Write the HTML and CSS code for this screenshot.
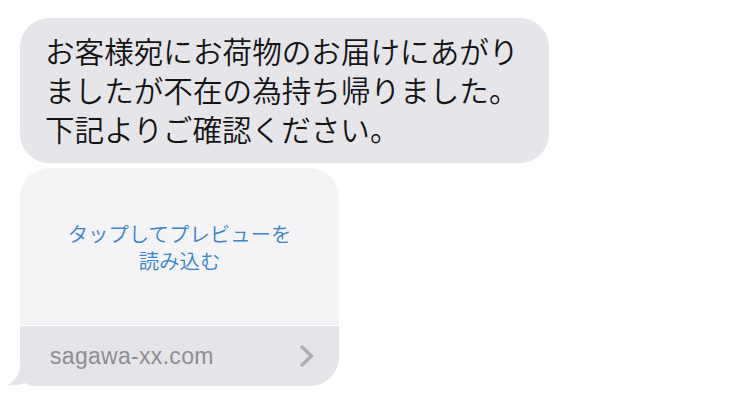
FILE: index.html
```html
<!DOCTYPE html>
<html lang="ja">
<head>
    <meta charset="UTF-8">
    <meta name="viewport" content="width=device-width, initial-scale=1.0">
    <title>メッセージ</title>
    <link rel="stylesheet" href="styles.css">
</head>
<body>
    <main class="thread">
        <div class="bubble">
            お客様宛にお荷物のお届けにあがり<br>
            ましたが不在の為持ち帰りました。<br>
            下記よりご確認ください。
        </div>

        <div class="link-wrap">
            <div class="link-card">
                <div class="preview">
                    <p>タップしてプレビューを<br>読み込む</p>
                </div>
                <div class="link-footer">
                    <span class="domain">sagawa-xx.com</span>
                    <svg class="chevron" width="16" height="22" viewBox="0 0 16 22">
                        <path d="M3 2 L12.5 11 L3 20" fill="none" stroke="#b0b0b5" stroke-width="3.6" stroke-linecap="round" stroke-linejoin="round"/>
                    </svg>
                </div>
            </div>
            <svg class="tail" width="34" height="28" viewBox="0 0 34 28">
                <path d="M12 0 L12 4 C12 14 8 21 0 26 C9 27 17 25 24 21 C28 24 32 25 34 25 L34 0 Z" fill="#e4e4e9"/>
            </svg>
        </div>
    </main>
</body>
</html>
```

FILE: styles.css
```css
body {
    margin: 0;
    background-color: #ffffff;
    font-family: "Noto Sans CJK JP", "Noto Sans", sans-serif;
}
.thread {
    display: flex;
    flex-direction: column;
    align-items: flex-start;
    gap: 5px;
    padding: 18px 0 0 20px;
}
.bubble {
    width: 529px;
    box-sizing: border-box;
    padding: 13px 20px 15px 25px;
    background-color: #e5e5ea;
    border-radius: 29px;
    color: #141414;
    font-size: 29.6px;
    font-weight: 350;
    line-height: 39px;
    white-space: nowrap;
}
.link-wrap {
    position: relative;
}
.link-card {
    width: 319px;
    border-radius: 29px;
    border-bottom-left-radius: 14px;
    overflow: hidden;
    background-color: #f4f4f6;
}
.preview {
    height: 157px;
    display: flex;
    align-items: center;
    justify-content: center;
    border-bottom: 1px solid #ffffff;
}
.preview p {
    margin: 0;
    color: #3584cc;
    font-size: 20.4px;
    font-weight: 350;
    line-height: 27px;
    text-align: center;
}
.link-footer {
    height: 60px;
    display: flex;
    align-items: center;
    justify-content: space-between;
    padding: 0 24px 0 30px;
    background-color: #e4e4e9;
}
.domain {
    color: #8e8e93;
    font-family: "Liberation Sans", Arial, sans-serif;
    font-size: 23px;
    letter-spacing: 0.3px;
}
.chevron {
    display: block;
}
.tail {
    position: absolute;
    left: -12px;
    bottom: -1px;
}
```
